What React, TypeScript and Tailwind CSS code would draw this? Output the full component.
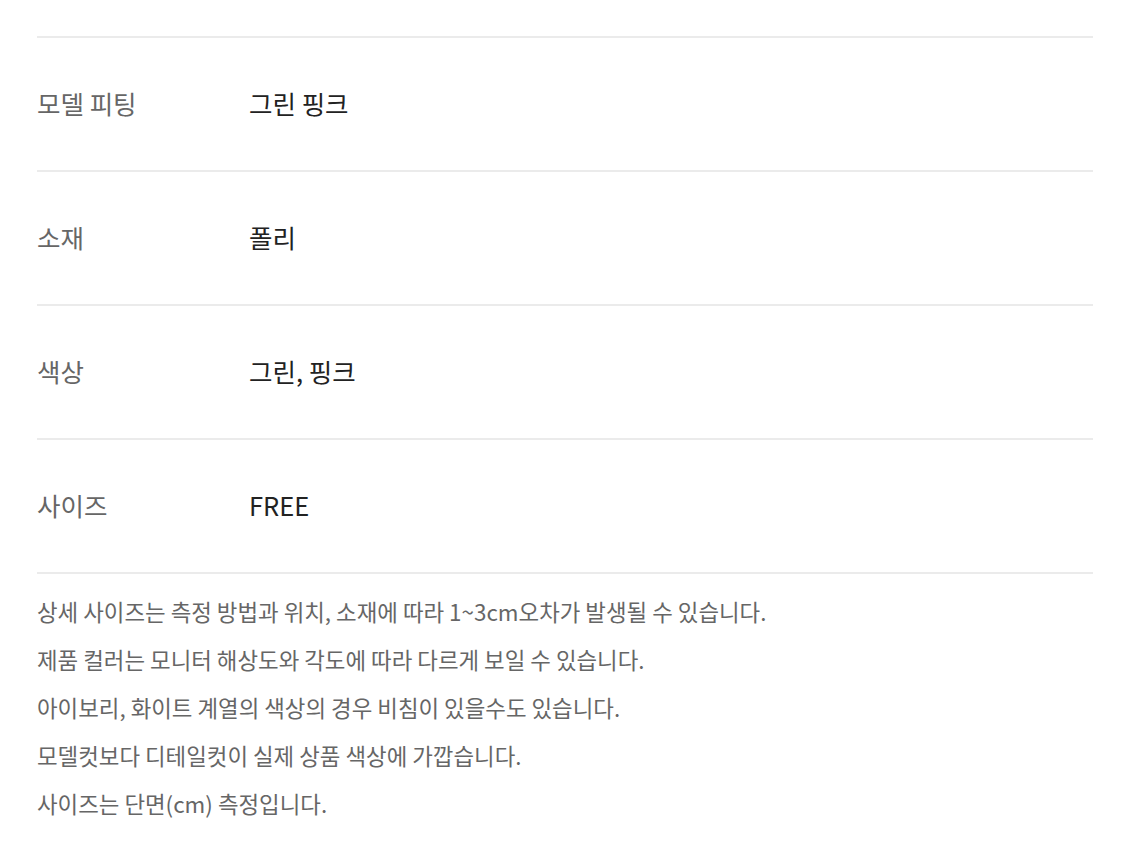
import React from "react";

const rows = [
  ["모델 피팅", "그린 핑크"],
  ["소재", "폴리"],
  ["색상", "그린, 핑크"],
  ["사이즈", "FREE"],
];

const notes = [
  "상세 사이즈는 측정 방법과 위치, 소재에 따라 1~3cm오차가 발생될 수 있습니다.",
  "제품 컬러는 모니터 해상도와 각도에 따라 다르게 보일 수 있습니다.",
  "아이보리, 화이트 계열의 색상의 경우 비침이 있을수도 있습니다.",
  "모델컷보다 디테일컷이 실제 상품 색상에 가깝습니다.",
  "사이즈는 단면(cm) 측정입니다.",
];

export default function App() {
  return (
    <div
      className="bg-white min-h-[856px] pt-[36px] pl-[37px] pr-[41px]"
      style={{ fontFamily: '"Noto Sans CJK KR", "Noto Sans", sans-serif' }}
    >
      {rows.map(([k, v]) => (
        <div key={k} className="flex items-center h-[134px] border-t-2 border-[#ebebeb] pb-[2px]">
          <div className="w-[212px] text-[25.5px] text-[#666666]">{k}</div>
          <div className="text-[25.5px] text-[#222222]">{v}</div>
        </div>
      ))}
      <div className="border-t-2 border-[#ebebeb] pt-[13px]">
        {notes.map((n) => (
          <p key={n} className="text-[22.4px] leading-[48px] text-[#666666]">
            {n}
          </p>
        ))}
      </div>
    </div>
  );
}
